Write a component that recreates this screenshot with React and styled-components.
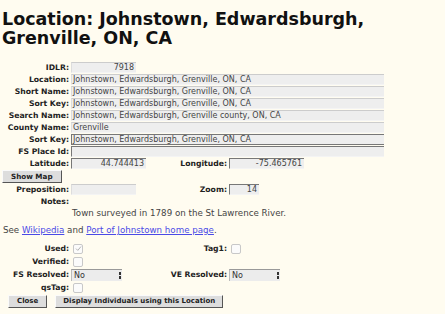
import React from 'react';
import styled, { createGlobalStyle } from 'styled-components';

const GlobalStyle = createGlobalStyle`
  html, body {
    margin: 0;
    padding: 0;
    background: #fffcf0;
  }
  body {
    font-family: "DejaVu Sans", Verdana, sans-serif;
    color: #333;
  }
`;

const Page = styled.div`
  width: 445px;
  height: 314px;
  overflow: hidden;
`;

const Heading = styled.h1`
  margin: 10px 0 13px 2px;
  font-size: 17.5px;
  font-weight: bold;
  color: #111;
  line-height: 19px;
`;

const FormGrid = styled.div`
  display: grid;
  grid-template-columns: 69px 90px 64px 1fr;
  column-gap: 2px;
  grid-auto-rows: minmax(${(p) => p.$row || 12}px, auto);
  align-items: center;
`;

const Label = styled.div`
  grid-column: ${(p) => p.$col || 1};
  font-size: 7.7px;
  font-weight: bold;
  color: #222;
  text-align: right;
  white-space: nowrap;
`;

const Field = styled.div`
  grid-column: ${(p) => p.$span || 'auto'};
  width: ${(p) => p.$width}px;
  height: 11px;
  box-sizing: border-box;
  background: #eeeeee;
  border-top: 1px solid ${(p) => (p.$dark ? '#777' : '#ccc')};
  border-left: 1px solid ${(p) => (p.$dark ? '#777' : '#ddd')};
  border-bottom: 1px solid ${(p) => (p.$darkBottom ? '#777' : '#f4f4f4')};
  font-size: 8px;
  line-height: 10px;
  padding: 0 2px 0 1px;
  color: #444;
  text-align: ${(p) => (p.$right ? 'right' : 'left')};
  white-space: nowrap;
  overflow: hidden;
`;

const Button = styled.button`
  font-family: "DejaVu Sans", Verdana, sans-serif;
  font-size: ${(p) => p.$fs || 7.2}px;
  font-weight: bold;
  color: #222;
  background: #dddddd;
  border: 1px solid;
  border-color: #fafafa #555 #555 #fafafa;
  height: 13px;
  padding: 0 ${(p) => p.$pad || 7}px;
  margin-left: ${(p) => p.$ml || 0}px;
  line-height: 11px;
`;

const ButtonCell = styled.div`
  grid-column: 1 / 3;
  height: 14px;
  display: flex;
  align-items: center;
`;

const NotesText = styled.div`
  grid-column: 2 / 5;
  grid-row: 13;
  margin-left: 1px;
  font-size: 8.7px;
  color: #444;
  white-space: nowrap;
`;

const SeeLine = styled.p`
  margin: 6px 0 6px 3px;
  font-size: 8.7px;
  color: #444;
  line-height: 11px;
`;

const Link = styled.a`
  color: #4a4ae6;
  text-decoration: underline;
`;

const Check = styled.span`
  grid-column: ${(p) => p.$col || 2};
  margin-left: 2px;
  width: 8px;
  height: 8px;
  border: 1px solid #c8c8c8;
  border-radius: 2px;
  background: #fbfbfb;
  display: flex;
  align-items: center;
  justify-content: center;
`;

const Select = styled.div`
  grid-column: ${(p) => p.$col || 2};
  width: 51px;
  height: 12px;
  box-sizing: border-box;
  background: #ececec;
  border-top: 1px solid #999;
  border-left: 1px solid #bbb;
  font-size: 8px;
  color: #333;
  padding-left: 2px;
  line-height: 11px;
  position: relative;
`;

const SelectArrow = styled.span`
  position: absolute;
  right: 1px;
  top: 2px;
  width: 2px;
  height: 7px;
  background: #333;
  &::before {
    content: '';
    position: absolute;
    left: 0;
    top: 3px;
    width: 2px;
    height: 1px;
    background: #ececec;
  }
`;

const Actions = styled.div`
  display: flex;
  align-items: center;
  margin-top: 1px;
  padding-left: 8px;
`;

const App = () => {
  const full = 'Johnstown, Edwardsburgh, Grenville, ON, CA';
  return (
    <Page>
      <GlobalStyle />
      <Heading>
        Location: Johnstown, Edwardsburgh,
        <br />
        Grenville, ON, CA
      </Heading>
      <FormGrid>
        <Label>IDLR:</Label>
        <Field $width={65} $right $span="2 / 5">7918</Field>

        <Label>Location:</Label>
        <Field $width={313} $span="2 / 5">{full}</Field>
        <Label>Short Name:</Label>
        <Field $width={313} $span="2 / 5">{full}</Field>
        <Label>Sort Key:</Label>
        <Field $width={313} $span="2 / 5">{full}</Field>
        <Label>Search Name:</Label>
        <Field $width={313} $span="2 / 5">Johnstown, Edwardsburgh, Grenville county, ON, CA</Field>
        <Label>County Name:</Label>
        <Field $width={313} $span="2 / 5">Grenville</Field>
        <Label>Sort Key:</Label>
        <Field $width={313} $span="2 / 5" $dark $darkBottom>{full}</Field>
        <Label>FS Place Id:</Label>
        <Field $width={313} $span="2 / 5" $dark></Field>

        <Label>Latitude:</Label>
        <Field $width={75} $right $dark>44.744413</Field>
        <Label $col={3}>Longitude:</Label>
        <Field $width={75} $right $dark>-75.465761</Field>

        <ButtonCell>
          <Button $ml={2} $pad={8}>Show Map</Button>
        </ButtonCell>
        <Label $col={1}>Preposition:</Label>
        <Field $width={65}></Field>
        <Label $col={3}>Zoom:</Label>
        <Field $width={30} $right $dark>14</Field>

        <Label>Notes:</Label>
        <NotesText>Town surveyed in 1789 on the St Lawrence River.</NotesText>
      </FormGrid>

      <SeeLine>
        See <Link href="#">Wikipedia</Link> and <Link href="#">Port of Johnstown home page</Link>.
      </SeeLine>

      <FormGrid $row={13}>
        <Label>Used:</Label>
        <Check>
          <svg width="7" height="7" viewBox="0 0 7 7">
            <path d="M1 3.6 L2.8 5.4 L6 1.5" fill="none" stroke="#aaa" strokeWidth="0.9" />
          </svg>
        </Check>
        <Label $col={3}>Tag1:</Label>
        <Check $col={4} />
        <Label>Verified:</Label>
        <Check />
        <Label $col={1}>FS Resolved:</Label>
        <Select>No<SelectArrow /></Select>
        <Label $col={3}>VE Resolved:</Label>
        <Select $col={4}>No<SelectArrow /></Select>
        <Label>qsTag:</Label>
        <Check />
      </FormGrid>

      <Actions>
        <Button $fs={7} $pad={8}>Close</Button>
        <Button $fs={7} $ml={8}>Display Individuals using this Location</Button>
      </Actions>
    </Page>
  );
};

export default App;
